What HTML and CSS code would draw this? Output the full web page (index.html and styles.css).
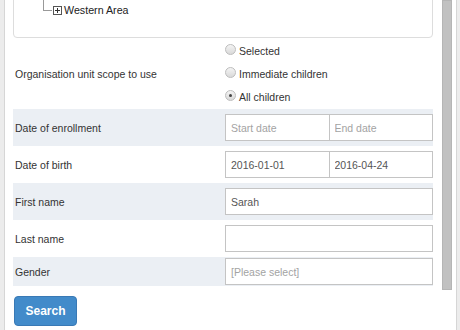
FILE: index.html
```html
<!DOCTYPE html>
<html lang="en">
<head>
    <meta charset="UTF-8">
    <title>Search</title>
    <link rel="stylesheet" href="styles.css">
</head>
<body>

<div class="modal">
    <div class="modal-body">

        <!-- Org unit tree (scrolled) -->
        <div class="tree">
            <div class="tree-node">
                <span class="elbow"></span>
                <svg class="expander" width="9" height="9" viewBox="0 0 9 9">
                    <rect x="0.5" y="0.5" width="8" height="8" fill="#fff" stroke="#555"/>
                    <path d="M2 4.5h5M4.5 2v5" stroke="#333" stroke-width="1"/>
                </svg>
                <span class="node-name">Western Area</span>
            </div>
        </div>

        <div class="search-form">
            <div class="row row-scope">
                <div class="label">Organisation unit scope to use</div>
                <div class="radios">
                    <div class="radio"><span class="dot"></span>Selected</div>
                    <div class="radio"><span class="dot"></span>Immediate children</div>
                    <div class="radio"><span class="dot checked"></span>All children</div>
                </div>
            </div>

            <div class="row shaded">
                <div class="label">Date of enrollment</div>
                <div class="pair">
                    <input type="text" placeholder="Start date">
                    <input type="text" placeholder="End date">
                </div>
            </div>

            <div class="row">
                <div class="label">Date of birth</div>
                <div class="pair">
                    <input type="text" value="2016-01-01">
                    <input type="text" value="2016-04-24">
                </div>
            </div>

            <div class="row shaded">
                <div class="label">First name</div>
                <input type="text" value="Sarah">
            </div>

            <div class="row">
                <div class="label">Last name</div>
                <input type="text">
            </div>

            <div class="row shaded row-select">
                <div class="label">Gender</div>
                <input type="text" placeholder="[Please select]">
            </div>
        </div>

        <button class="btn-search">Search</button>
    </div>

    <div class="scrollbar"><div class="thumb"></div></div>
</div>

</body>
</html>
```

FILE: styles.css
```css
/* Page behind the dialog */
body {
    margin: 0;
    height: 330px;
    overflow: hidden;
    background-color: #ececec;
    font-family: "Liberation Sans", Arial, Helvetica, sans-serif;
    font-size: 10.5px;
    color: #333;
}

.modal {
    display: flex;
    margin-left: 4px;
    width: 451px;
    height: 330px;
    background-color: #fff;
    border-left: 1px solid #d6d6d6;
    border-right: 1px solid #d6d6d6;
    overflow: hidden;
}

.modal-body {
    width: 420px;
    flex-shrink: 0;
    padding-left: 8px;
}

/* Tree */
.tree {
    margin-top: -20px;
    padding: 21px 0 19px;
    border: 1px solid #ddd;
    border-radius: 4px;
}

.tree-node {
    display: flex;
    align-items: center;
    height: 16px;
    margin-left: 29px;
}

.elbow {
    align-self: flex-start;
    width: 9px;
    height: 26px;
    margin-top: -17px;
    border-left: 1px solid #999;
    border-bottom: 1px solid #999;
    box-sizing: border-box;
}

.expander {
    margin-left: 1px;
}

.node-name {
    margin-left: 2px;
    font-size: 10.7px;
    color: #222;
}

/* Form rows */
.row {
    display: grid;
    grid-template-columns: 212px minmax(0, 1fr);
    align-items: center;
    height: 37px;
    box-sizing: border-box;
    padding: 5px 0;
}

.row.shaded {
    background-color: #ebeff4;
}

.row-select {
    height: 29px;
    padding: 1px 0;
}

.row-scope {
    height: 71px;
    padding: 0;
}

.label {
    padding-left: 2px;
}

.radios {
    display: flex;
    flex-direction: column;
}

.radio {
    display: flex;
    align-items: center;
    height: 23px;
    color: #333;
}

.dot {
    position: relative;
    width: 11px;
    height: 11px;
    margin-right: 3px;
    margin-top: -3px;
    border-radius: 50%;
    box-sizing: border-box;
    border: 1px solid #bdbdbd;
    background: linear-gradient(#f4f4f4, #d9d9d9);
}

.dot.checked::after {
    content: "";
    position: absolute;
    left: 3px;
    top: 3px;
    width: 3px;
    height: 3px;
    border-radius: 50%;
    background-color: #444;
}

.pair {
    display: flex;
}

.pair input {
    flex: 1;
    min-width: 0;
}

.pair input + input {
    margin-left: -1px;
}

input {
    width: 100%;
    height: 27px;
    box-sizing: border-box;
    margin: 0;
    padding: 0 5px;
    border: 1px solid #c4c4c4;
    font-family: inherit;
    font-size: 10.5px;
    color: #555;
    background-color: #fff;
    outline: none;
}

input::placeholder {
    color: #a3a3a3;
}

.btn-search {
    margin-top: 10px;
    margin-left: 1px;
    width: 63px;
    height: 30px;
    background-color: #428bca;
    border: 1px solid #3979b5;
    border-radius: 4px;
    color: #fff;
    font-family: inherit;
    font-size: 12px;
    font-weight: bold;
    cursor: pointer;
}

/* Scrollbar */
.scrollbar {
    width: 10px;
    margin-left: 9px;
}

.thumb {
    height: 290px;
    background-color: #c1c1c1;
    border: 1px solid #b5b5b5;
    box-sizing: border-box;
}
```
